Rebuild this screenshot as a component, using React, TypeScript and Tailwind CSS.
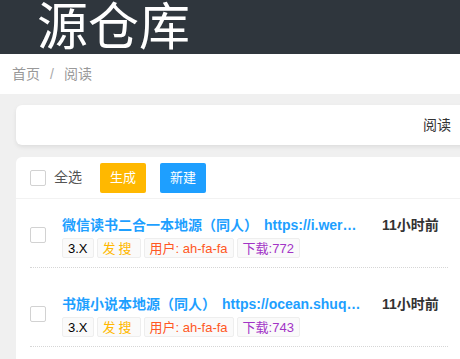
import React from "react";

const font = { fontFamily: '"Liberation Sans", "Noto Sans CJK SC", sans-serif' };

type Item = { title: string; url: string; dl: string };
const items: Item[] = [
  { title: "微信读书二合一本地源（同人）", url: "https://i.weread.qq.com/book/list", dl: "772" },
  { title: "书旗小说本地源（同人）", url: "https://ocean.shuqireader.com/api", dl: "743" },
];

function Box() {
  return <div className="w-4 h-4 shrink-0 rounded-[2px] border border-[#d2d2d2] bg-white" />;
}

function Tag({ children, color }: { children: React.ReactNode; color: string }) {
  return (
    <span
      className="h-5 px-[5px] flex items-center border border-[#eeeeee] bg-[#fafafa] text-[13px] leading-none rounded-[2px]"
      style={{ color }}
    >
      {children}
    </span>
  );
}

export default function App() {
  return (
    <div className="w-[460px] h-[359px] overflow-hidden bg-[#f0f0f0]" style={font}>
      <div className="h-[54px] bg-[#2f363d] overflow-hidden">
        <div
          className="pl-[37px] text-[51px] leading-none text-white -mt-[2px]"
          style={{ fontFamily: '"Noto Sans CJK SC", sans-serif' }}
        >
          源仓库
        </div>
      </div>
      <div className="h-[40px] bg-white flex items-center pl-[12px] text-[14px] text-[#999999]">
        <span>首页</span>
        <span className="mx-[10px] text-[#aaaaaa]">/</span>
        <span>阅读</span>
      </div>
      <div className="ml-4 mt-[11px] w-[460px] h-[40px] bg-white rounded-[6px] shadow-[0_2px_4px_rgba(0,0,0,0.08)] flex items-center justify-end pr-[25px] text-[14px] text-[#333333]">
        阅读
      </div>
      <div className="ml-4 mt-[12px] w-[460px] h-[300px] bg-white rounded-t-[6px]">
        <div className="h-[42px] pl-[14px] flex items-center border-b border-[#f2f2f2]">
          <Box />
          <span className="ml-[8px] text-[14px] text-[#555555]">全选</span>
          <button className="ml-[18px] w-[46px] h-[30px] rounded-[2px] bg-[#ffb800] text-white text-[13px] flex items-center justify-center">
            生成
          </button>
          <button className="ml-[14px] w-[46px] h-[30px] rounded-[2px] bg-[#1e9fff] text-white text-[13px] flex items-center justify-center">
            新建
          </button>
        </div>
        {items.map((it, i) => (
          <div
            key={i}
            className={
              i === 0
                ? "ml-[14px] w-[418px] pt-[16px] pb-[9px] border-b border-dotted border-[#d6d6d6] flex items-center"
                : "ml-[14px] w-[418px] pt-[26px] pb-[9px] border-b border-dotted border-[#d6d6d6] flex items-center"
            }
          >
            <div className="mt-[-3px]">
              <Box />
            </div>
            <div className="ml-4 flex flex-col">
              <div className="flex items-center h-5">
                <div className="w-[300px] shrink-0 truncate text-[14px] font-bold text-[#1e9fff] leading-5">
                  {it.title}
                  <span className="ml-[6px]">{it.url}</span>
                </div>
                <div className="ml-[20px] shrink-0 text-[14px] font-bold text-[#333333] leading-5">11小时前</div>
              </div>
              <div className="mt-[3px] flex gap-[3px]">
                <Tag color="#000000">3.X</Tag>
                <Tag color="#ffb800">
                  <span className="tracking-[3px]">发搜</span>
                </Tag>
                <Tag color="#ff5722">用户: ah-fa-fa</Tag>
                <Tag color="#a233c6">下载:{it.dl}</Tag>
              </div>
            </div>
          </div>
        ))}
      </div>
    </div>
  );
}
